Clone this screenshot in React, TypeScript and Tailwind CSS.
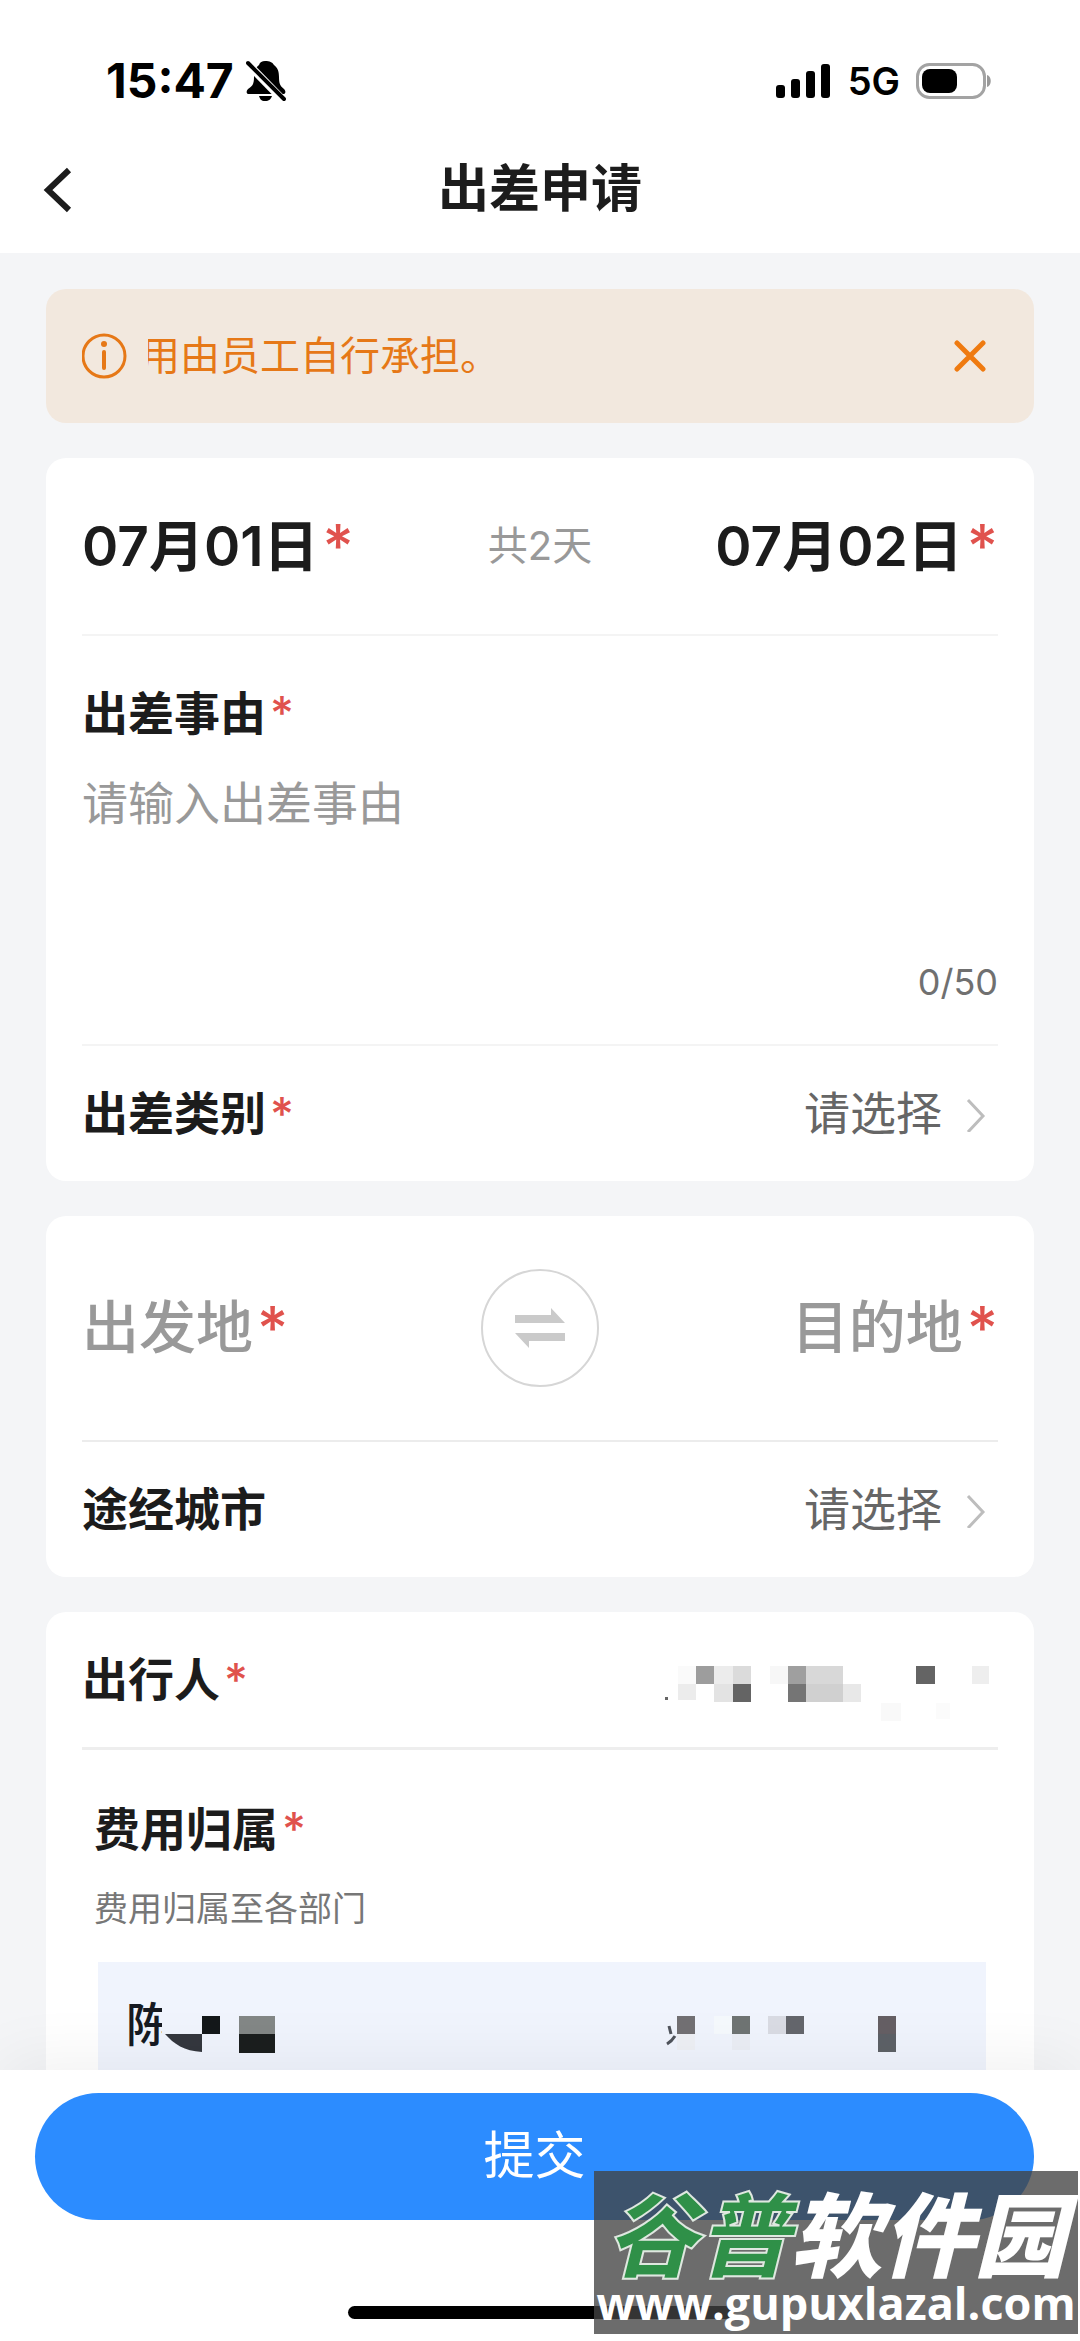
import { useState, type ReactNode } from 'react';

const fontStack = "font-[Inter,'Noto_Sans_CJK_SC',sans-serif]";

// x, y, width, height, fill
type Block = [number, number, number, number, string];

const travelerBlocks: Block[] = [
  [14, 2, 18, 18, '#fafafa'],
  [32, 2, 18, 18, '#9d9d9d'],
  [50, 2, 19, 18, '#ececec'],
  [69, 2, 18, 18, '#dbdbdb'],
  [14, 20, 18, 16, '#ececec'],
  [50, 20, 19, 18, '#e3e3e3'],
  [69, 20, 18, 18, '#646464'],
  [106, 2, 18, 18, '#f7f7f7'],
  [124, 2, 18, 18, '#9f9f9f'],
  [142, 2, 37, 18, '#d8d8d8'],
  [124, 20, 18, 18, '#757575'],
  [142, 20, 37, 18, '#d0d0d0'],
  [179, 20, 18, 18, '#e8e8e8'],
  [217, 39, 20, 18, '#f9f9f9'],
  [272, 39, 14, 16, '#fbfbfb'],
  [252, 2, 19, 18, '#646464'],
  [308, 2, 17, 18, '#eeeeee'],
];

const departmentBlocks: Block[] = [
  [11, 0, 18, 18, '#727073'],
  [66, 0, 18, 18, '#6f7473'],
  [102, 0, 18, 18, '#d9dbe3'],
  [120, 0, 18, 18, '#64666c'],
  [212, 0, 18, 18, '#655f64'],
  [212, 18, 18, 18, '#5d6167'],
  [48, 0, 18, 18, '#f5f9fd'],
  [11, 18, 18, 16, '#eef0f5'],
  [66, 18, 18, 16, '#ebeef5'],
];

function Required({ large = false }: { large?: boolean }) {
  return <span className={large ? 'text-[#e0524d] text-[60px] leading-[60px] font-medium ml-1' : 'text-[#e0524d] text-[46px] leading-[60px] font-medium ml-1'}>*</span>;
}

function Card({ children }: { children: ReactNode }) {
  return <section className="bg-white rounded-[20px] px-9">{children}</section>;
}

function Chevron() {
  return (
    <svg className="w-5 h-9" viewBox="0 0 20 36" fill="none" stroke="#bdbdbd" strokeWidth="3">
      <path d="M2 4 L17 20 L2 36" />
    </svg>
  );
}

function PickerRow({ label, required }: { label: string; required?: boolean }) {
  return (
    <button type="button" className="w-full h-[135px] flex items-center justify-between">
      <span className="flex items-center text-[46px] font-semibold text-[#1c1c1c]">
        {label}
        {required && <Required />}
      </span>
      <span className="flex items-center gap-6 pr-3 text-[46px] text-[#666]">
        请选择
        <Chevron />
      </span>
    </button>
  );
}

function StatusBar() {
  return (
    <div className="h-[126px] pt-9 pl-[106px] pr-[88px] flex items-center justify-between text-black">
      <div className="flex items-center gap-3">
        <span className="text-[48px] font-bold">15:47</span>
        <svg className="w-10 h-[42px]" viewBox="0 0 40 42">
          <path d="M19 1c-3 0-5 1-6 4-4 3-5 7-5 12 0 8-2 9-6 12-2 2-2 5 1 5h34c3 0 3-3 1-5-4-3-5-6-5-12 0-5-1-9-5-12-2-3-4-4-9-4z" fill="#000" />
          <path d="M13 36h13c-1 3-3 5-7 5s-5-2-6-5z" fill="#000" />
          <path d="M1 3 L37 40" stroke="#fff" strokeWidth="8" />
          <path d="M2 3 L38 39" stroke="#000" strokeWidth="4" strokeLinecap="round" />
        </svg>
      </div>
      <div className="flex items-center gap-4">
        <svg className="w-14 h-9" viewBox="0 0 56 36">
          <rect x="0" y="22" width="9" height="13" rx="3" />
          <rect x="15" y="16" width="9" height="19" rx="3" />
          <rect x="30" y="8" width="9" height="27" rx="3" />
          <rect x="45" y="1" width="9" height="34" rx="3" />
        </svg>
        <span className="text-[38px] font-semibold">5G</span>
        <svg className="w-[76px] h-9" viewBox="0 0 76 36">
          <rect x="1.5" y="1.5" width="67" height="33" rx="12" fill="none" stroke="#a3a3a3" strokeWidth="3" />
          <rect x="6" y="6" width="35" height="24" rx="8" />
          <path d="M71 12c5 1 5 11 0 12z" fill="#999" />
        </svg>
      </div>
    </div>
  );
}

export default function App() {
  const [reason, setReason] = useState('');
  const [noticeOpen, setNoticeOpen] = useState(true);

  return (
    <div className={`h-screen flex flex-col bg-[#f4f5f7] ${fontStack}`}>
      <header className="bg-white">
        <StatusBar />
        <div className="h-[127px] px-10 grid grid-cols-[1fr_auto_1fr] items-center">
          <button type="button" aria-label="返回" className="w-9 h-12">
            <svg className="w-9 h-12" viewBox="0 0 36 48" fill="none" stroke="#1c1c1c" strokeWidth="6">
              <path d="M29 4 L8 24 L29 44" />
            </svg>
          </button>
          <h1 className="text-[51px] font-semibold text-[#1c1c1c]">出差申请</h1>
        </div>
      </header>

      <main className="flex-1 min-h-0 overflow-y-auto [scrollbar-width:none] px-[46px] pt-9 flex flex-col gap-[35px]">
        {noticeOpen && (
          <div className="h-[134px] shrink-0 rounded-[20px] bg-[#f2e8de] px-9 flex items-center text-[#e67817]">
            <svg className="w-[46px] h-[46px] mr-5" viewBox="0 0 46 46" fill="none" stroke="currentColor" strokeWidth="3">
              <circle cx="22" cy="23" r="21" />
              <path d="M22 19 V35" strokeWidth="4" strokeLinecap="round" />
              <circle cx="22" cy="11" r="3" fill="currentColor" stroke="none" />
            </svg>
            {/* scrolling notice, clipped at the left edge */}
            <div className="flex-1 overflow-hidden">
              <p className="-ml-2 text-[40px] whitespace-nowrap">用由员工自行承担。</p>
            </div>
            <button type="button" aria-label="关闭" className="mr-3" onClick={() => setNoticeOpen(false)}>
              <svg className="w-8 h-8" viewBox="0 0 32 32" stroke="#ef7a10" strokeWidth="5" strokeLinecap="round">
                <path d="M3 3 L29 29 M29 3 L3 29" />
              </svg>
            </button>
          </div>
        )}

        <Card>
          <div className="h-[178px] grid grid-cols-[1fr_auto_1fr] items-center border-b-2 border-[#f4f4f4]">
            <button type="button" className="flex items-center text-[55px] font-semibold text-[#1c1c1c]">
              07月01日
              <Required large />
            </button>
            <span className="text-[40px] text-[#999]">共2天</span>
            <button type="button" className="justify-self-end flex items-center text-[55px] font-semibold text-[#1c1c1c]">
              07月02日
              <Required large />
            </button>
          </div>
          <div className="pt-[42px] pb-8 border-b-2 border-[#f4f4f4]">
            <label htmlFor="reason" className="flex items-center text-[46px] leading-[70px] font-semibold text-[#1c1c1c]">
              出差事由
              <Required />
            </label>
            <textarea
              id="reason"
              value={reason}
              maxLength={50}
              onChange={e => setReason(e.target.value)}
              placeholder="请输入出差事由"
              className="block w-full h-[160px] mt-5 resize-none outline-none text-[46px] leading-[70px] text-[#1c1c1c] placeholder:text-[#999]"
            />
            <div className="mt-6 text-right text-[36px] leading-[60px] text-[#707070]">{reason.length}/50</div>
          </div>
          <PickerRow label="出差类别" required />
        </Card>

        <Card>
          <div className="h-[226px] grid grid-cols-[1fr_auto_1fr] items-center border-b-2 border-[#ececec]">
            <button type="button" className="flex items-center text-[57px] font-medium text-[#999]">
              出发地
              <Required large />
            </button>
            <button type="button" aria-label="交换" className="w-[118px] h-[118px] rounded-full border-2 border-[#d6d6d6] flex items-center justify-center">
              <svg className="w-[50px] h-10" viewBox="0 0 50 40" fill="#cacaca">
                <path d="M0 7 H36 V0 L50 15 H0z" />
                <path d="M50 33 H14 V40 L0 25 H50z" />
              </svg>
            </button>
            <button type="button" className="justify-self-end flex items-center text-[57px] font-medium text-[#999]">
              目的地
              <Required large />
            </button>
          </div>
          <PickerRow label="途经城市" />
        </Card>

        <Card>
          <div className="h-[138px] flex items-center justify-between border-b-[3px] border-[#eee]">
            <span className="flex items-center text-[46px] font-semibold text-[#1c1c1c]">
              出行人
              <Required />
            </span>
            <svg className="w-[334px] h-[60px] mt-7" viewBox="0 0 334 60">
              {travelerBlocks.map(([x, y, w, h, fill], i) => (
                <rect key={i} x={x} y={y} width={w} height={h} fill={fill} />
              ))}
              <rect x="1" y="33" width="3" height="3" fill="#666" />
            </svg>
          </div>
          <div className="px-3 pt-11">
            <h2 className="flex items-center text-[46px] leading-[70px] font-semibold text-[#1c1c1c]">
              费用归属
              <Required />
            </h2>
            <p className="mt-5 text-[34px] leading-[50px] text-[#777]">费用归属至各部门</p>
            <div className="mt-7 ml-1 h-[160px] bg-[#f0f4fd] pl-7 pr-[88px] pt-8 flex items-start justify-between">
              <div className="flex">
                <span className="w-9 overflow-hidden text-[46px] leading-[60px] font-medium text-[#161a22]">陈</span>
                <svg className="w-[120px] h-[60px]" viewBox="0 0 120 60">
                  <path d="M3 40 H40 V58 C22 57 12 50 3 40z" fill="#34373e" />
                  <rect x="40" y="22" width="18" height="18" fill="#14181a" />
                  <rect x="77" y="22" width="36" height="18" fill="#838786" />
                  <rect x="77" y="40" width="36" height="19" fill="#1b1e1e" />
                </svg>
              </div>
              <svg className="w-[232px] h-9 mt-[22px]" viewBox="0 0 232 36">
                {departmentBlocks.map(([x, y, w, h, fill], i) => (
                  <rect key={i} x={x} y={y} width={w} height={h} fill={fill} />
                ))}
                <path d="M3 10 L5 18 M9 20 Q6 25 1 28" fill="none" stroke="#50545c" strokeWidth="3" />
              </svg>
            </div>
          </div>
        </Card>
      </main>

      <footer className="relative bg-white h-[271px] pt-[23px] shadow-[0_-10px_60px_rgba(0,0,0,0.06)]">
        <div className="pl-[35px] pr-[46px]">
          <button type="button" className="w-full h-[127px] rounded-full bg-[#2c8cff] text-white text-[51px]">提交</button>
        </div>
        <div className="mx-auto mt-[86px] w-[384px] h-[13px] rounded-full bg-black" />

        {/* site badge over the corner of the footer */}
        <div className="absolute right-[2px] bottom-[7px] w-[484px] h-[163px] bg-[#434343]/78 text-white text-center overflow-hidden">
          <div className="pt-5 text-[92px] leading-[92px] font-black italic whitespace-nowrap">
            <span className="text-[#2f9048] [-webkit-text-stroke:2px_#dfe8e0]">谷普</span>软件园
          </div>
          <div className="font-['Open_Sans',sans-serif] text-[45px] leading-[40px] font-bold whitespace-nowrap">www.gupuxlazal.com</div>
        </div>
      </footer>
    </div>
  );
}
